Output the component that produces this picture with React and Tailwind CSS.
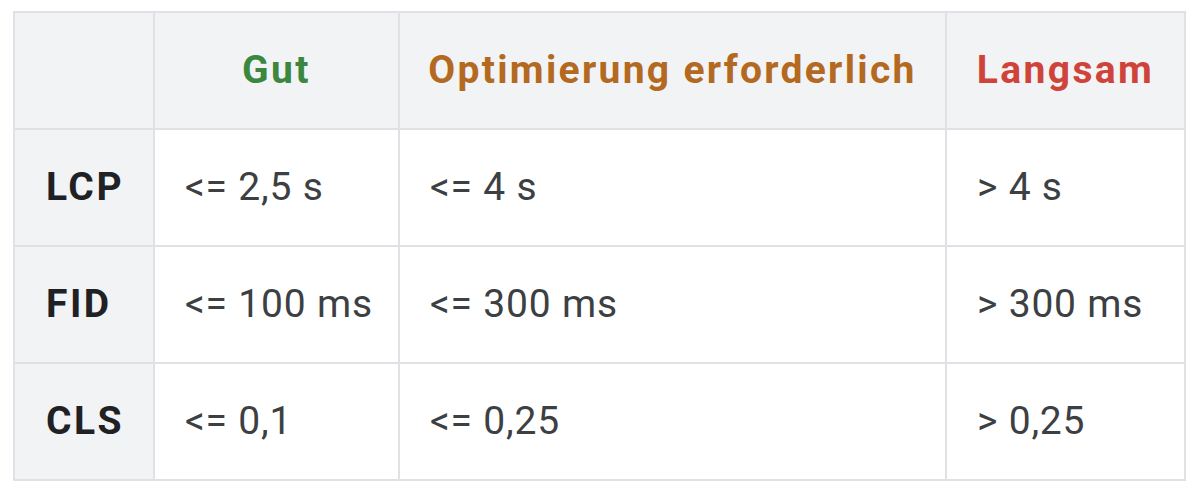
const rows = [
  { label: "LCP", good: "<= 2,5 s", mid: "<= 4 s", slow: "> 4 s" },
  { label: "FID", good: "<= 100 ms", mid: "<= 300 ms", slow: "> 300 ms" },
  { label: "CLS", good: "<= 0,1", mid: "<= 0,25", slow: "> 0,25" },
];

export default function App() {
  return (
    <div
      className="min-h-[498px] w-[1200px] bg-white pl-[13px] pt-[11px]"
      style={{ fontFamily: "Roboto, 'Liberation Sans', sans-serif" }}
    >
      <div className="grid w-[1173px] grid-cols-[138px_243px_545px_237px] grid-rows-[115px_115px_115px_115px] gap-[2px] bg-[#dfe1e5] p-[2px] text-[39px]">
        <div className="bg-[#f1f3f4]" />
        <div className="flex items-center justify-center bg-[#f1f3f4] font-bold tracking-[2.4px] text-[#3b873f]">
          Gut
        </div>
        <div className="flex items-center justify-center bg-[#f1f3f4] font-bold tracking-[2.3px] text-[#b3691f]">
          Optimierung erforderlich
        </div>
        <div className="flex items-center justify-center bg-[#f1f3f4] font-bold tracking-[2.4px] text-[#d0433a]">
          Langsam
        </div>
        {rows.map((r) => (
          <>
            <div key={r.label} className="flex items-center bg-[#f1f3f4] pl-[31px] font-bold tracking-[2.5px] text-[#202124]">
              {r.label}
            </div>
            <div className="flex items-center bg-white pl-[30px] tracking-[0.8px] text-[#3c4043]">{r.good}</div>
            <div className="flex items-center bg-white pl-[30px] tracking-[0.8px] text-[#3c4043]">{r.mid}</div>
            <div className="flex items-center bg-white pl-[30px] tracking-[0.8px] text-[#3c4043]">{r.slow}</div>
          </>
        ))}
      </div>
    </div>
  );
}
